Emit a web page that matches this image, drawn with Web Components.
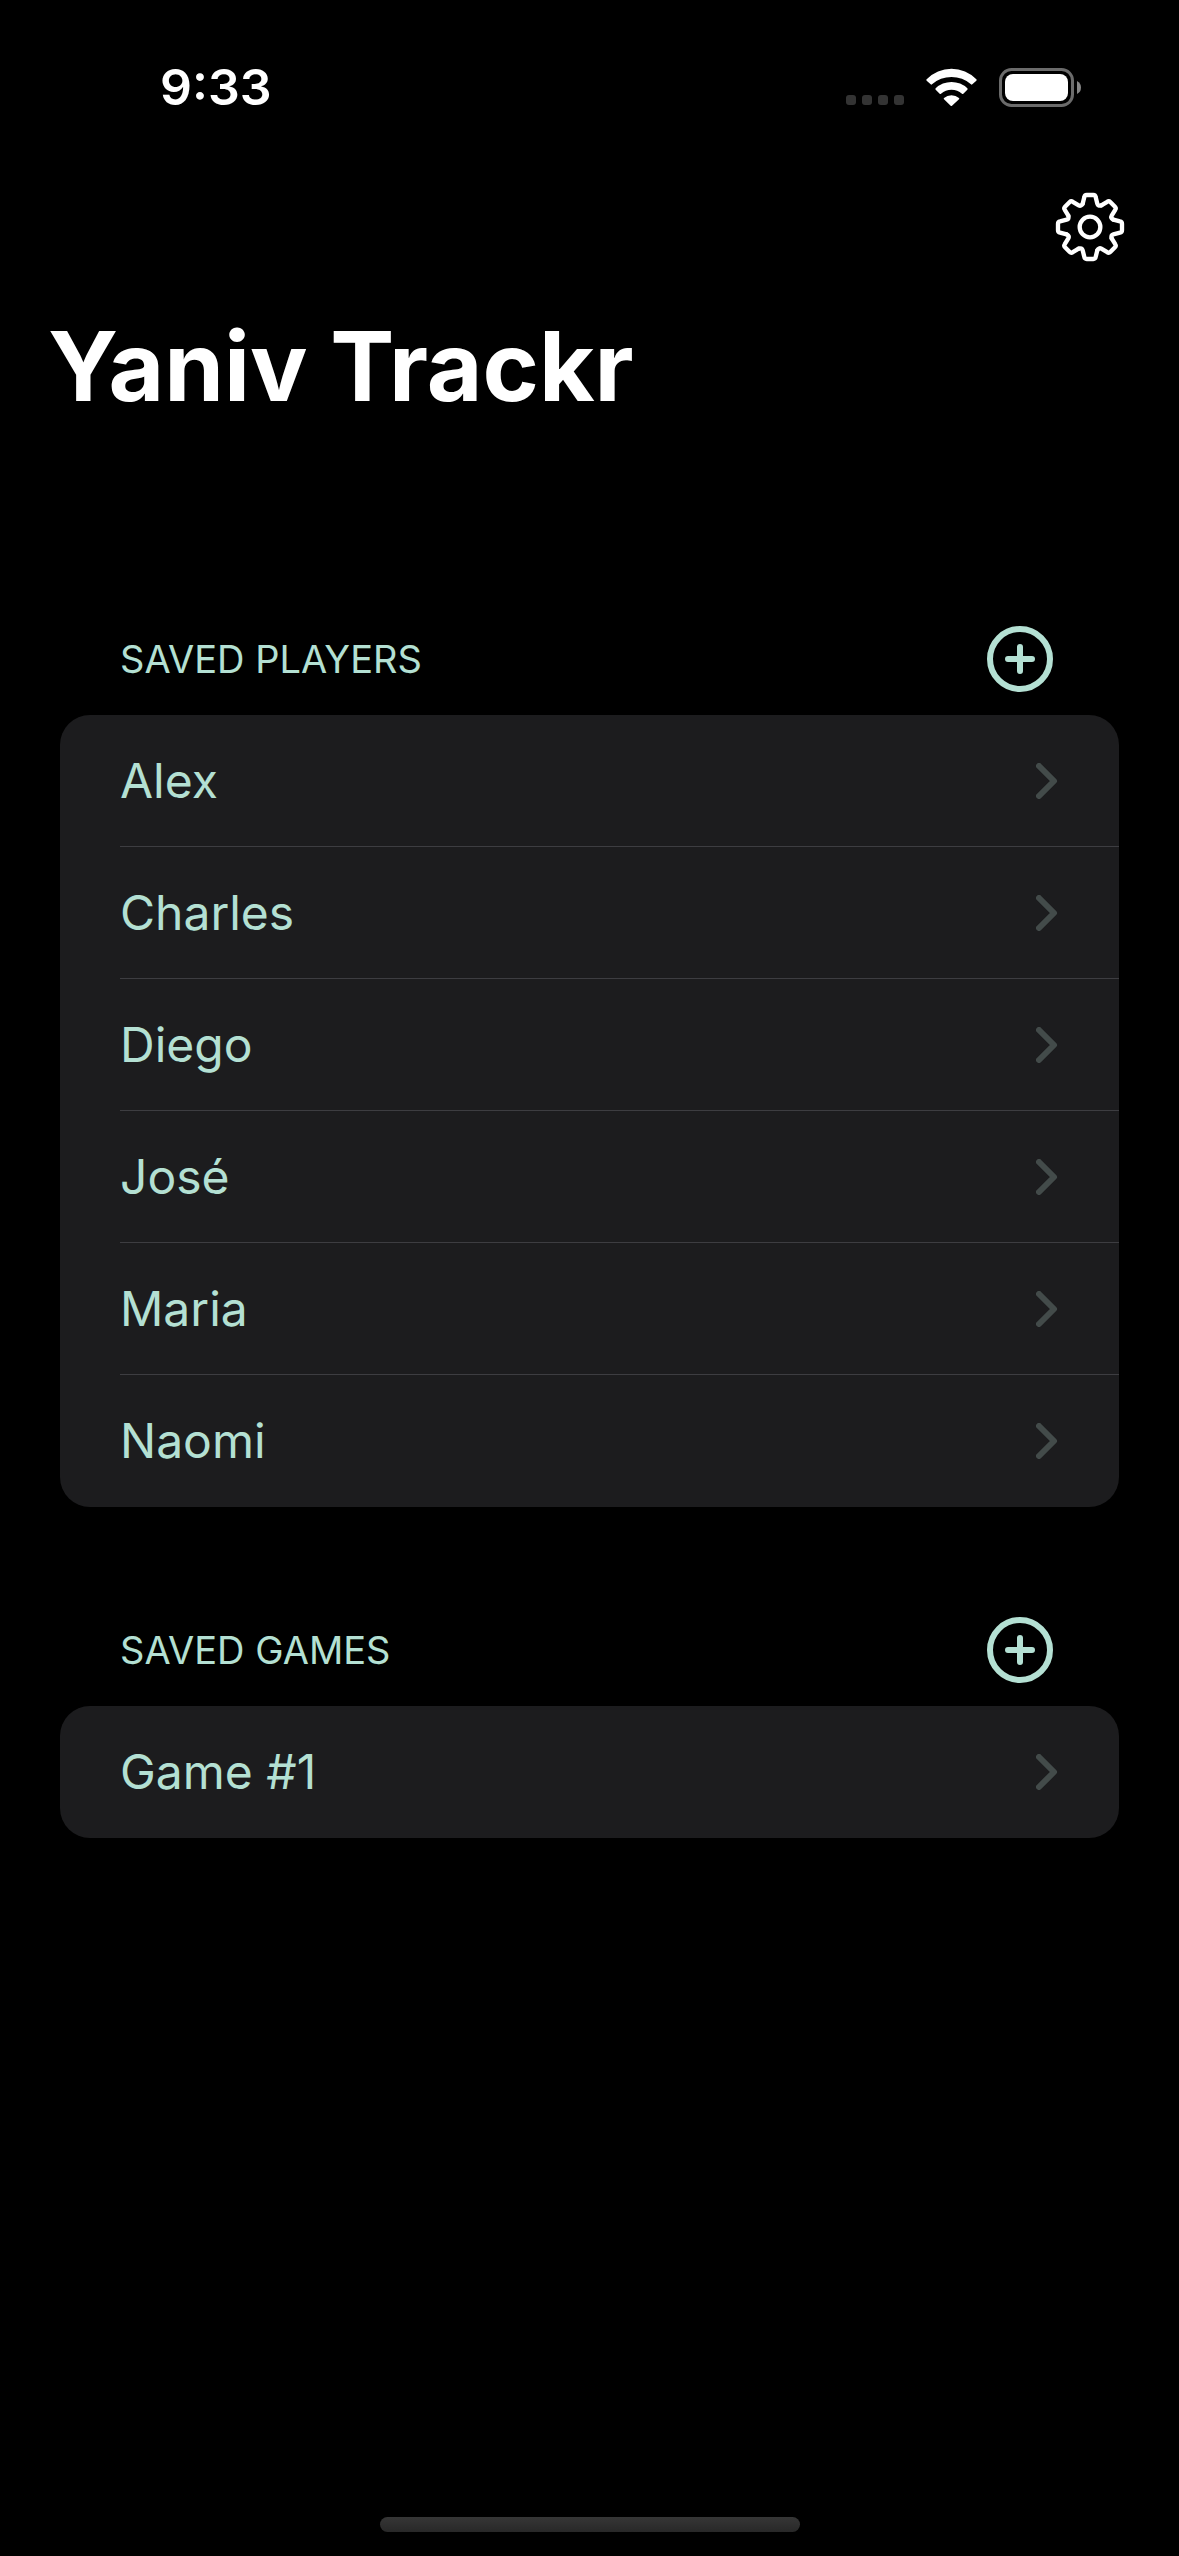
<!DOCTYPE html>
<html lang="en">
<head>
<meta charset="utf-8">
<meta name="viewport" content="width=device-width, initial-scale=1">
<title>Yaniv Trackr</title>
<style>
  html {
    background: #000;
  }
  body {
    margin: 0;
    font-family: Inter, "Liberation Sans", sans-serif;
    color: #fff;
  }
</style>
</head>
<body>
<yt-app>
  <yt-status-bar slot="status" time="9:33"></yt-status-bar>
  <yt-title-bar slot="title">Yaniv Trackr</yt-title-bar>
  <yt-section label="Saved Players" action="Add player">
    <yt-row>Alex</yt-row>
    <yt-row>Charles</yt-row>
    <yt-row>Diego</yt-row>
    <yt-row>José</yt-row>
    <yt-row>Maria</yt-row>
    <yt-row>Naomi</yt-row>
  </yt-section>
  <yt-section label="Saved Games" action="Add game">
    <yt-row>Game #1</yt-row>
  </yt-section>
</yt-app>

<script>
class YtApp extends HTMLElement {
  constructor() {
    super();
    this.attachShadow({mode: "open"});
    this.shadowRoot.innerHTML = `
      <style>
        :host {
          --accent: #b4e0d3;
          --card: #1c1c1e;
          --line: #3d3d41;
          display: flex;
          flex-direction: column;
          min-height: 100vh;
          background: #000;
        }
        main {
          flex: 1;
          display: flex;
          flex-direction: column;
          gap: 110px;
          padding: 198px 60px 60px;
        }
        footer {
          display: flex;
          justify-content: center;
          padding-bottom: 24px;
        }
        .home {
          width: 420px;
          height: 15px;
          border-radius: 8px;
          background: linear-gradient(#363636, #282828);
        }
      </style>
      <slot name="status"></slot>
      <slot name="title"></slot>
      <main><slot></slot></main>
      <footer><div class="home"></div></footer>
    `;
  }
}

class YtStatusBar extends HTMLElement {
  constructor() {
    super();
    this.attachShadow({mode: "open"});
    this.shadowRoot.innerHTML = `
      <style>
        :host {
          display: flex;
          align-items: center;
          justify-content: space-between;
          height: 174px;
          padding: 0 97px 0 160px;
          font-size: 50px;
          font-weight: 600;
        }
        .icons {
          display: flex;
          align-items: flex-end;
          gap: 22px;
        }
        svg {
          display: block;
        }
      </style>
      <time></time>
      <div class="icons">
        <svg width="58" height="12" viewBox="0 0 58 12" fill="#333">
          <rect width="10" height="10" rx="3"/>
          <rect x="16" width="10" height="10" rx="3"/>
          <rect x="32" width="10" height="10" rx="3"/>
          <rect x="48" width="10" height="10" rx="3"/>
        </svg>
        <svg width="51" height="39" viewBox="288 54 153 117" fill="#fff">
          <path d="M290 88 A104 104 0 0 1 439 88 Q441 90 439 92 L427 103 Q425 105 423 103 A88 88 0 0 0 306 103 Q304 105 302 103 L290 92 Q288 90 290 88 Z"/>
          <path d="M317 115 A68 68 0 0 1 412 115 Q414 117 412 119 L400 131 Q398 133 396 131 A48 48 0 0 0 333 131 Q331 133 329 131 L317 119 Q315 117 317 115 Z"/>
          <path d="M342 144 A34 34 0 0 1 387 144 Q389 146 387 148 L366 167 Q364 169 362 167 L342 148 Q340 146 342 144 Z"/>
        </svg>
        <svg width="83" height="39" viewBox="0 0 83 39">
          <rect x="1.5" y="1.5" width="72" height="36" rx="11" fill="none" stroke="#6b6b6b" stroke-width="3"/>
          <rect x="6" y="6" width="63" height="27" rx="8" fill="#fff"/>
          <path d="M78 13 Q82 15 82 19.500 Q82 24 78 26 Z" fill="#858585"/>
        </svg>
      </div>
    `;
  }

  connectedCallback() {
    this.shadowRoot.querySelector("time").textContent = this.getAttribute("time");
  }
}

class YtTitleBar extends HTMLElement {
  constructor() {
    super();
    this.attachShadow({mode: "open"});
    this.shadowRoot.innerHTML = `
      <style>
        :host {
          display: flex;
          flex-direction: column;
          gap: 42px;
          padding: 18px 54px 0 48px;
        }
        button {
          align-self: flex-end;
          padding: 0;
          border: 0;
          background: none;
          color: inherit;
        }
        svg {
          display: block;
        }
        h1 {
          margin: 0;
          font-size: 96px;
          line-height: 124px;
          font-weight: 700;
        }
      </style>
      <button type="button" aria-label="Settings">
        <svg width="70" height="70" viewBox="-105 -105 210 210" fill="none" stroke="currentColor" stroke-width="13" stroke-linecap="round" stroke-linejoin="round">
          <circle r="31"/>
        </svg>
      </button>
      <h1><slot></slot></h1>
    `;

    // eight teeth around the hub
    const svg = this.shadowRoot.querySelector("svg");
    for (let i = 0; i < 8; i++) {
      const tooth = document.createElementNS("http://www.w3.org/2000/svg", "path");
      tooth.setAttribute("d", "M-22 -70 L-17 -90 Q-16 -96 -10 -96 H10 Q16 -96 17 -90 L22 -70 Q24 -62 34 -65");
      tooth.setAttribute("transform", `rotate(${i * 45})`);
      svg.append(tooth);
    }
  }
}

class YtSection extends HTMLElement {
  constructor() {
    super();
    this.attachShadow({mode: "open"});
    this.shadowRoot.innerHTML = `
      <style>
        :host {
          display: block;
          color: var(--accent);
        }
        header {
          display: flex;
          align-items: center;
          justify-content: space-between;
          padding: 0 66px 0 60px;
          height: 66px;
          margin-bottom: 23px;
        }
        h2 {
          margin: 0;
          font-size: 38px;
          font-weight: 400;
          text-transform: uppercase;
        }
        button {
          padding: 0;
          border: 0;
          background: none;
          color: inherit;
        }
        svg {
          display: block;
        }
        .card {
          overflow: hidden;
          border-radius: 30px;
          background: var(--card);
        }
      </style>
      <header>
        <h2></h2>
        <button type="button">
          <svg width="66" height="66" viewBox="0 0 66 66" fill="none" stroke="currentColor" stroke-linecap="round">
            <circle cx="33" cy="33" r="30" stroke-width="6"/>
            <path d="M33 21 V45 M21 33 H45" stroke-width="6"/>
          </svg>
        </button>
      </header>
      <div class="card"><slot></slot></div>
    `;
  }

  connectedCallback() {
    this.shadowRoot.querySelector("h2").textContent = this.getAttribute("label");
    this.shadowRoot.querySelector("button").setAttribute("aria-label", this.getAttribute("action"));
  }
}

class YtRow extends HTMLElement {
  constructor() {
    super();
    this.attachShadow({mode: "open"});
    this.shadowRoot.innerHTML = `
      <style>
        :host {
          display: block;
          padding-left: 60px;
        }
        a {
          display: flex;
          align-items: center;
          justify-content: space-between;
          box-sizing: border-box;
          min-height: 132px;
          padding-right: 61px;
          border-bottom: 1px solid var(--line);
          color: inherit;
          font-size: 48px;
          text-decoration: none;
        }
        :host(:last-child) a {
          border-bottom-color: transparent;
        }
        svg {
          flex: none;
          color: #434b4a;
        }
      </style>
      <a href="#">
        <span><slot></slot></span>
        <svg width="22" height="36" viewBox="0 0 22 36" fill="none" stroke="currentColor" stroke-width="6" stroke-linecap="round" stroke-linejoin="round">
          <path d="M3 3 L18 18 L3 33"/>
        </svg>
      </a>
    `;
  }
}

customElements.define("yt-app", YtApp);
customElements.define("yt-status-bar", YtStatusBar);
customElements.define("yt-title-bar", YtTitleBar);
customElements.define("yt-section", YtSection);
customElements.define("yt-row", YtRow);
</script>
</body>
</html>
